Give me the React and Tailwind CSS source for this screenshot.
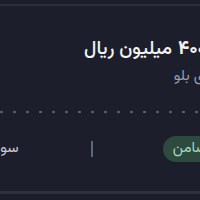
import React from 'react';

const font = { fontFamily: '"Vazirmatn", "Noto Sans Arabic", "DejaVu Sans", sans-serif' };

const LoanCard = () => {
  return (
    <div className="w-[200px] h-[200px] overflow-hidden bg-[#1c1f2b] flex flex-col" style={font}>
      <div className="h-[4px] shrink-0" />
      <div className="h-[2px] bg-[#2c2f3c] shrink-0" />

      <div dir="rtl" className="-mr-[6px] -ml-[120px] flex flex-col">
        <div className="mt-[30px] h-[28px] flex items-center text-[19px] text-[#f1f2f4] whitespace-nowrap">
          <span className="font-bold">۴۰۰</span>
          <span className="mr-[6px] font-medium">میلیون ریال</span>
        </div>
        <div className="mt-[3px] h-[20px] -mr-[40px] flex items-center text-[15px] text-[#9a9ea8] whitespace-nowrap">
          وام فوری بلو
        </div>

        <div className="mt-[23px] h-[4px] bg-[radial-gradient(circle,#5f6373_1px,transparent_1.6px)] bg-[length:13px_4px] bg-[position:-2px_0]" />

        <div className="mt-[22px] -mr-[12px] flex items-center whitespace-nowrap">
          <span className="h-[26px] px-[10px] rounded-full bg-[#2c4a3e] text-[#a6d8bc] text-[15px] flex items-center">
            ضامن
          </span>
          <span className="mr-[70px] w-[2px] h-[16px] bg-[#60657a]" />
          <span className="mr-[72px] text-[15px] text-[#c9cbd1]">سود ۲۳ درصد</span>
        </div>
      </div>

      <div className="mt-auto mb-[6px] h-[3px] bg-[#2e3140] shrink-0" />
    </div>
  );
};

export default function App() {
  return <LoanCard />;
}
